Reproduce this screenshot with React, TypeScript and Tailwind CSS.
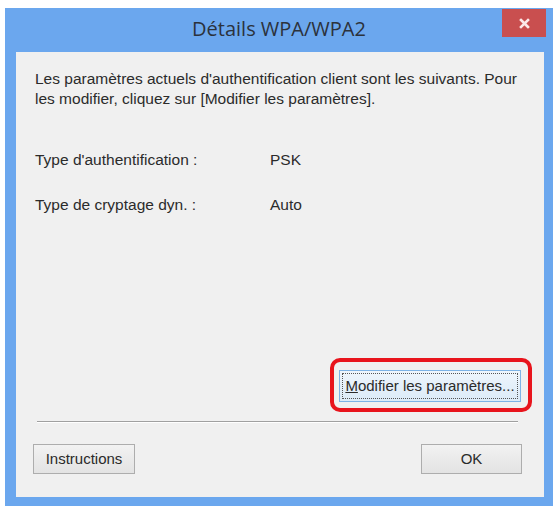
import React from 'react';

// Boîte de dialogue Windows 8 : détails WPA/WPA2
const btnClass =
  "h-[30px] border border-[#adadad] bg-gradient-to-b from-[#f2f2f2] to-[#e3e3e3] text-[15px] text-[#2a2a2a] flex items-center justify-center";

const App: React.FC = () => {
  return (
    <div className="w-[559px] h-[509px] bg-white pt-[8px] pl-[5px] font-['Liberation_Sans',Arial,sans-serif]">
      <div className="w-[548px] h-[498px] bg-[#6ba7ee] flex flex-col">
        {/* Barre de titre */}
        <div className="relative h-[44px] flex items-center justify-center">
          <span className="text-[20px] text-[#2b323c] font-['Open_Sans',sans-serif] leading-none -mt-[2px]">
            Détails WPA/WPA2
          </span>
          <div className="absolute right-[7px] top-[1px] w-[44px] h-[28px] bg-[#c94f4f] flex items-center justify-center">
            <svg width="11" height="11" viewBox="0 0 11 11">
              <path d="M2 2 L9 9 M9 2 L2 9" stroke="#fbe9e9" strokeWidth="2.6" strokeLinecap="square" />
            </svg>
          </div>
        </div>

        {/* Zone de contenu */}
        <div className="ml-[11px] mr-[9px] mb-[9px] flex-1 bg-[#f0f0f0] flex flex-col text-[#2b2b2b] text-[15.5px]">
          <p className="pl-[19px] pr-[8px] pt-[17px] leading-[20px] whitespace-nowrap">
            Les paramètres actuels d'authentification client sont les suivants. Pour
            <br />
            les modifier, cliquez sur [Modifier les paramètres].
          </p>

          <div className="pl-[19px] mt-[41px] flex flex-col gap-[26px] leading-[19px]">
            <div className="flex">
              <span className="w-[235px]">Type d'authentification :</span>
              <span>PSK</span>
            </div>
            <div className="flex">
              <span className="w-[235px]">Type de cryptage dyn. :</span>
              <span>Auto</span>
            </div>
          </div>

          <div className="flex-1" />

          <div className="flex justify-end pr-[12px]">
            <div className="border-4 border-[#e8141c] rounded-[10px] pl-[5px] pr-[7px] pt-[8px] pb-[6px]">
              <div className="w-[182px] h-[32px] border border-[#7db3e6] bg-gradient-to-b from-[#eef5fc] to-[#dcebf8] p-[2px]">
                <div className="h-full border border-dotted border-[#555] flex items-center justify-center text-[15px] whitespace-nowrap">
                  <span>
                    <span className="underline">M</span>odifier les paramètres...
                  </span>
                </div>
              </div>
            </div>
          </div>

          <div className="mt-[9px] ml-[21px] mr-[26px] h-[2px] border-t border-[#a0a0a0] border-b border-b-white" />

          <div className="flex justify-between pl-[17px] pr-[22px] mt-[21px] mb-[23px]">
            <div className={`${btnClass} w-[102px]`}>Instructions</div>
            <div className={`${btnClass} w-[101px]`}>OK</div>
          </div>
        </div>
      </div>
    </div>
  );
};

export default App;
